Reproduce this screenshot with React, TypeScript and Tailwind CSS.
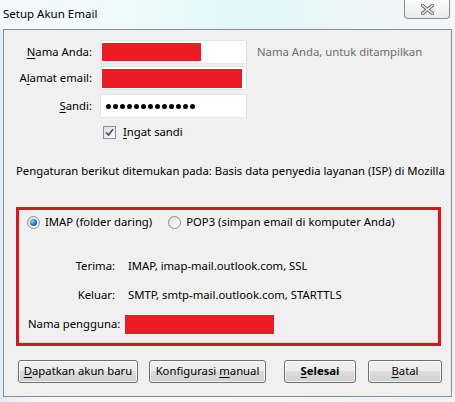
import React from 'react';

const font = { fontFamily: '"Noto Sans", "Open Sans", sans-serif' };

const U: React.FC<{ children: React.ReactNode }> = ({ children }) => <span className="underline underline-offset-2">{children}</span>;

const Field: React.FC<{ children?: React.ReactNode }> = ({ children }) => (
    <div className="w-[147px] h-[24px] bg-white border border-[#abadb3] border-t-[#e3e3e3] border-l-[#e2e3ea] border-r-[#dbdfe6] border-b-[#e3e9ef] p-[1px] flex items-center">
        {children}
    </div>
);

const Radio: React.FC<{ checked?: boolean }> = ({ checked }) => (
    <span className="w-[13px] h-[13px] rounded-full border border-[#8e8f8f] bg-[linear-gradient(135deg,#e0e0e0,#ffffff)] flex items-center justify-center">
        {checked && <span className="w-[7px] h-[7px] rounded-full bg-[radial-gradient(circle_at_35%_35%,#7cd3ff,#0f5d96_70%)]" />}
    </span>
);

const Button: React.FC<{ className?: string; children: React.ReactNode }> = ({ className = '', children }) => (
    <div className={`h-[23px] rounded-[3px] border border-[#707070] bg-[linear-gradient(#f2f2f2_0%,#ebebeb_49%,#dddddd_50%,#cfcfcf_100%)] shadow-[inset_0_0_0_1px_rgba(255,255,255,0.7)] flex items-center justify-center text-black whitespace-nowrap ${className}`}>
        <span>{children}</span>
    </div>
);

export default function App() {
    return (
        <div style={font} className="w-[455px] h-[402px] bg-[linear-gradient(90deg,#dfeef5_0%,#f4f8fa_8%,#f3f8fa_50%,#eef4f7_100%)] text-[11.3px] text-black overflow-hidden whitespace-nowrap">
            {/* title bar */}
            <div className="relative h-[29px] flex items-center pl-[3px] pb-[1px] bg-[linear-gradient(90deg,#f5f8fa_0%,#f1fafc_20%,#e2f8fb_55%,#eef6f8_80%,#f4f6f8_100%)]">
                <span className="text-[11.5px] text-black">Setup Akun Email</span>
                <div className="absolute left-[404px] top-0 w-[46px] h-[19px] border border-t-0 border-[#8c8c8c] rounded-b-[4px] bg-[linear-gradient(#fbfbfb,#e9ecef)] flex items-center justify-center">
                    <svg width="13" height="11" viewBox="0 0 13 11">
                        <path d="M1.5 1.5 L11.5 9.5 M11.5 1.5 L1.5 9.5" stroke="#6b6b6b" strokeWidth="3.4" strokeLinecap="square" />
                        <path d="M1.5 1.5 L11.5 9.5 M11.5 1.5 L1.5 9.5" stroke="#f4f4f4" strokeWidth="1.4" strokeLinecap="square" />
                    </svg>
                </div>
            </div>

            {/* client area */}
            <div className="mx-[3px] h-[368px] border border-[#8b8b8b] bg-[#f0f0f0] flex flex-col">
                <div className="pt-[10px] flex flex-col">
                    <div className="flex items-center">
                        <div className="w-[88px] text-right"><U>N</U>ama Anda:</div>
                        <div className="ml-[8px]">
                            <Field><div className="w-[99px] h-[18px] bg-[#ed1c24]" /></Field>
                        </div>
                        <div className="ml-[10px] text-[#6d6d6d]">Nama Anda, untuk ditampilkan</div>
                    </div>
                    <div className="flex items-center mt-[2px]">
                        <div className="w-[88px] text-right">A<U>l</U>amat email:</div>
                        <div className="ml-[8px]">
                            <Field><div className="w-[140px] h-[19px] bg-[#ed1c24]" /></Field>
                        </div>
                    </div>
                    <div className="flex items-center mt-[4px]">
                        <div className="w-[88px] text-right"><U>S</U>andi:</div>
                        <div className="ml-[8px]">
                            <Field>
                                <div className="flex gap-[2px] pl-[4px]">
                                    {Array.from({ length: 13 }).map((_, i) => (
                                        <span key={i} className="w-[5px] h-[5px] rounded-full bg-black" />
                                    ))}
                                </div>
                            </Field>
                        </div>
                    </div>
                    <div className="flex items-center mt-[6px] ml-[99px]">
                        <span className="w-[13px] h-[13px] border border-[#8e8f8f] bg-[linear-gradient(135deg,#dcdcdc,#ffffff)] flex items-center justify-center">
                            <svg width="9" height="9" viewBox="0 0 9 9">
                                <path d="M1 4.5 L3.5 7 L8 1.2" fill="none" stroke="#3a4f78" strokeWidth="1.6" />
                            </svg>
                        </span>
                        <span className="ml-[7px]"><U>I</U>ngat sandi</span>
                    </div>
                </div>

                <div className="mt-[22px] ml-[12px]">Pengaturan berikut ditemukan pada: Basis data penyedia layanan (ISP) di Mozilla</div>

                {/* highlighted group */}
                <div className="mt-[27px] ml-[12px] w-[425px] h-[139px] border-[3px] border-[#d3181e]">
                    <div className="h-full border-r border-b border-[#d9d9d9] pl-[8px] pt-[4px]">
                        <div className="flex items-center">
                            <Radio checked />
                            <span className="ml-[5px]">IMAP (folder daring)</span>
                            <span className="ml-[16px]"><Radio /></span>
                            <span className="ml-[5px]">POP3 (simpan email di komputer Anda)</span>
                        </div>
                        <div className="mt-[27px] flex items-center">
                            <div className="w-[88px] text-right">Terima:</div>
                            <div className="ml-[13px]">IMAP, imap-mail.outlook.com, SSL</div>
                        </div>
                        <div className="mt-[12px] flex items-center">
                            <div className="w-[88px] text-right">Keluar:</div>
                            <div className="ml-[13px]">SMTP, smtp-mail.outlook.com, STARTTLS</div>
                        </div>
                        <div className="mt-[11px] flex items-center">
                            <div className="w-[98px] pl-[1px]">Nama pengguna:</div>
                            <div className="w-[149px] h-[19px] bg-[#ed1c24]" />
                        </div>
                    </div>
                </div>

                {/* buttons */}
                <div className="mt-[14px] flex items-center pl-[14px]">
                    <Button className="w-[120px]"><U>D</U>apatkan akun baru</Button>
                    <Button className="w-[117px] ml-[11px]">Konfigurasi <U>m</U>anual</Button>
                    <Button className="w-[72px] ml-[18px] font-bold"><U>S</U>elesai</Button>
                    <Button className="w-[74px] ml-[12px]"><U>B</U>atal</Button>
                </div>
            </div>
        </div>
    );
}
